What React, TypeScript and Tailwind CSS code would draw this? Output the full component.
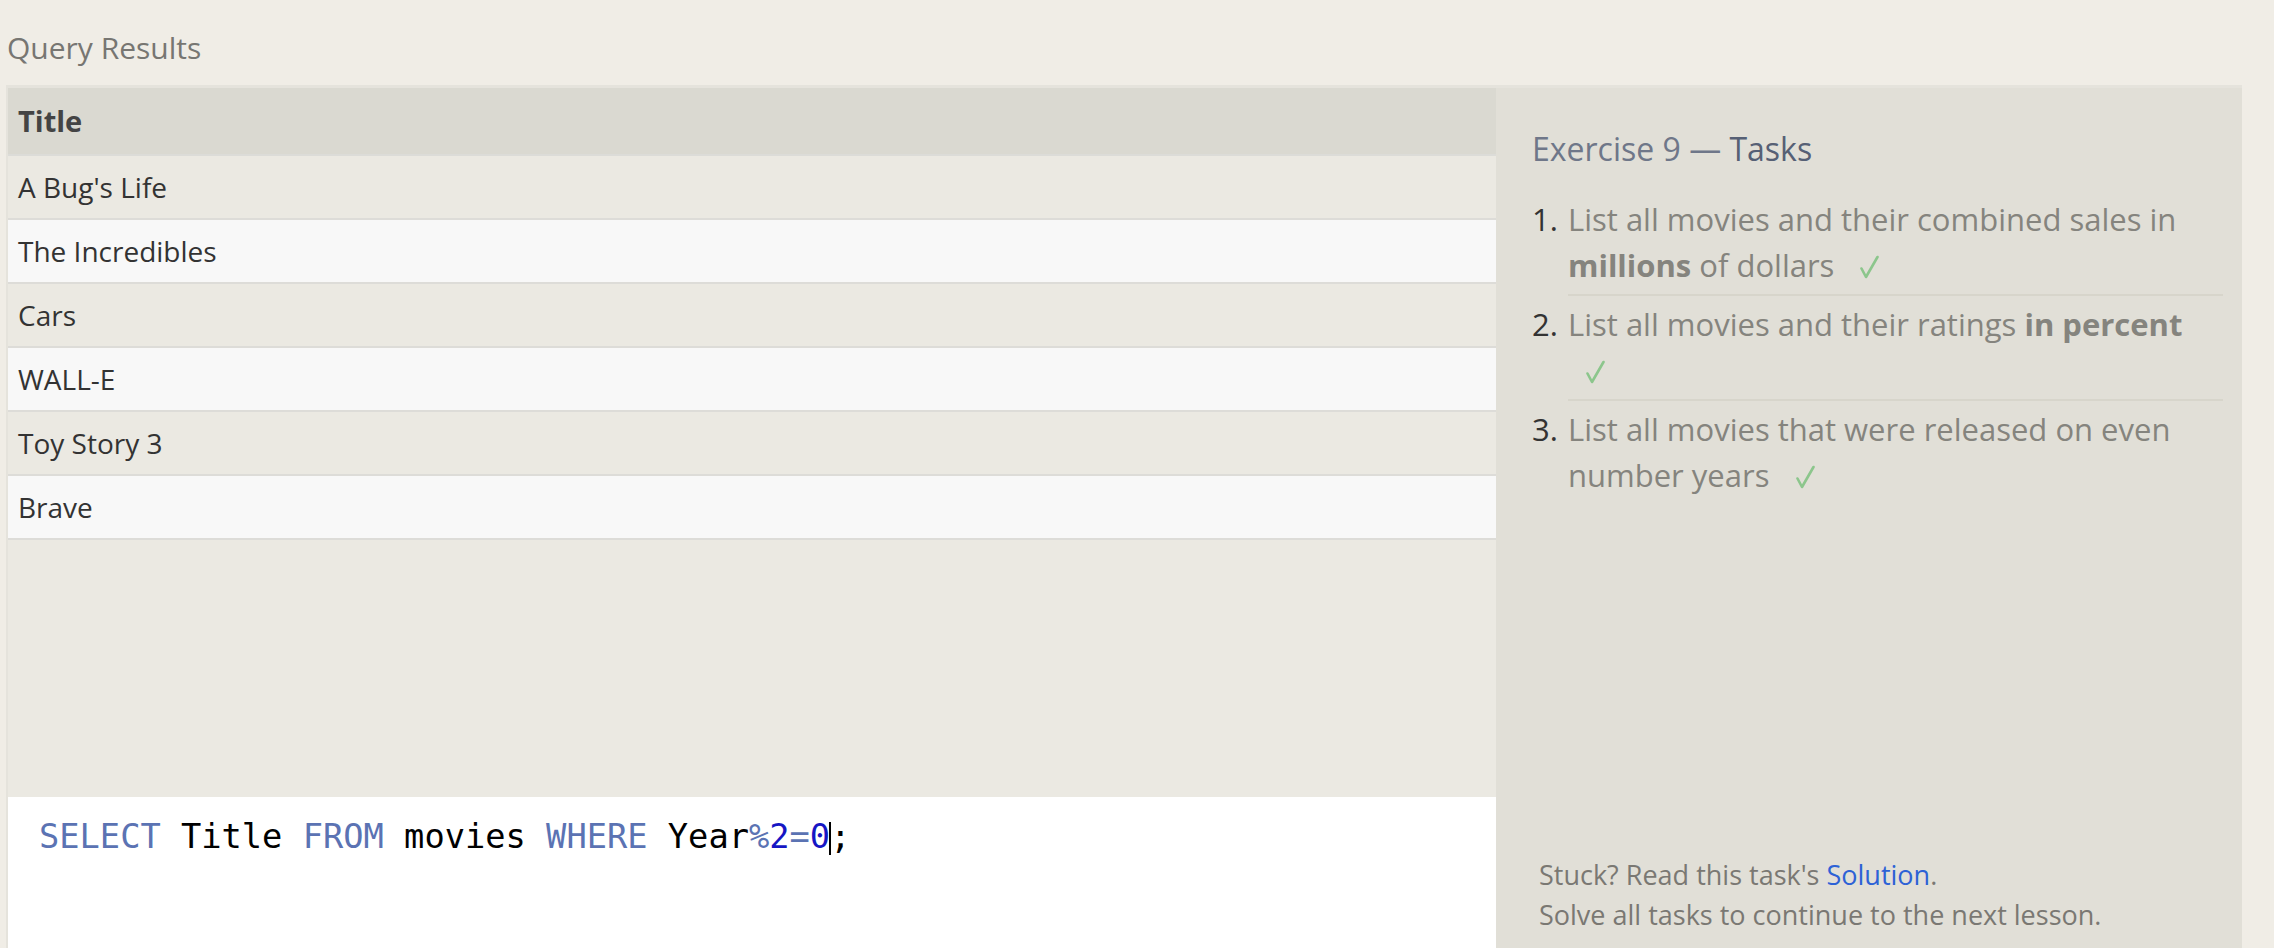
import React from "react";

const movies = ["A Bug's Life", "The Incredibles", "Cars", "WALL-E", "Toy Story 3", "Brave"];

type Task = { parts: { text: string; bold?: boolean }[] };

const tasks: Task[] = [
  {
    parts: [
      { text: "List all movies and their combined sales in " },
      { text: "millions", bold: true },
      { text: " of dollars" },
    ],
  },
  {
    parts: [
      { text: "List all movies and their ratings " },
      { text: "in percent", bold: true },
    ],
  },
  { parts: [{ text: "List all movies that were released on even number years" }] },
];

function Check() {
  return (
    <svg
      viewBox="0 0 20 24"
      className="inline-block ml-[17px] w-[20px] h-[24px] align-[-2px]"
      fill="none"
      stroke="#8cc68c"
      strokeWidth="2.6"
      strokeLinecap="round"
      strokeLinejoin="round"
    >
      <path d="M2.5 13.5 L7 22 L18.5 2" />
    </svg>
  );
}

export default function App() {
  return (
    <div className="h-[948px] overflow-hidden bg-[#f0ede6] font-['Open_Sans',sans-serif] flex flex-col">
      <div className="h-[85px] pt-[25px] pl-[7px] text-[30px] leading-normal text-[#777672]">
        Query Results
      </div>

      <div className="flex flex-1 min-h-0 ml-[6px] mr-[32px] border-t-[3px] border-l-2 border-[#e5e3dc]">
        {/* results + editor */}
        <div className="w-[1488px] flex flex-col">
          <div className="h-[68px] flex items-center pl-[10px] bg-[#dad9d1] border-b-2 border-[#dcdcd8] text-[29px] font-bold text-[#444]">
            Title
          </div>
          {movies.map((m, i) => (
            <div
              key={m}
              className={`h-[64px] flex items-center pl-[10px] border-b-2 border-[#dddcd8] text-[28px] text-[#333] ${
                i % 2 === 0 ? "bg-[#ebe9e2]" : "bg-[#f8f8f8]"
              }`}
            >
              {m}
            </div>
          ))}
          <div className="flex-1 bg-[#ebe9e2]" />
          <div className="h-[151px] bg-white pt-[15px] pl-[31px] font-['DejaVu_Sans_Mono',monospace] text-[33.7px] leading-normal whitespace-pre text-black">
            <span className="text-[#5b73b3]">SELECT</span> Title <span className="text-[#5b73b3]">FROM</span> movies{" "}
            <span className="text-[#5b73b3]">WHERE</span> Year<span className="text-[#5b73b3]">%</span>
            <span className="text-[#1616c4]">2</span>
            <span className="text-[#5b73b3]">=</span>
            <span className="text-[#1616c4]">0</span>
            <span className="inline-block w-0 h-[33px] -mx-px border-l-2 border-black align-[-7px]" />;
          </div>
        </div>

        {/* tasks panel */}
        <div className="flex-1 bg-[#e1dfd7] flex flex-col pt-[37px] pl-[36px] pr-[19px]">
          <h2 className="text-[32px] leading-normal text-[#6f7789]">
            Exercise 9 — <span className="text-[#566075] font-medium">Tasks</span>
          </h2>
          <ol className="mt-[18px]">
            {tasks.map((t, i) => (
              <li key={i} className="flex text-[31px] leading-[46px]">
                <span className="w-[36px] pt-[5px] text-[#333] shrink-0">{i + 1}.</span>
                <div
                  className={`flex-1 pt-[5px] pb-[6px] text-[#85847e] ${
                    i < tasks.length - 1 ? "border-b-2 border-[#d7d5cb]" : ""
                  }`}
                >
                  {t.parts.map((p, j) => (
                    <span key={j} className={p.bold ? "font-bold" : ""}>
                      {p.text}
                    </span>
                  ))}{" "}
                  <Check />
                </div>
              </li>
            ))}
          </ol>
          <div className="mt-auto pb-[13px] pl-[7px] text-[27px] leading-[40px] text-[#7a7873]">
            <p>
              Stuck? Read this task's <a className="text-[#2d62d6]">Solution</a>.
            </p>
            <p>Solve all tasks to continue to the next lesson.</p>
          </div>
        </div>
      </div>
    </div>
  );
}
